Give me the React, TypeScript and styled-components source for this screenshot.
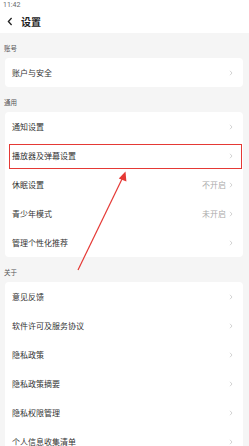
import styled, { createGlobalStyle } from "styled-components";

const Global = createGlobalStyle`
  html, body {
    margin: 0;
    padding: 0;
    background: #f5f5f5;
  }
  body {
    font-family: "Noto Sans CJK SC", "Noto Sans", sans-serif;
  }
`;

const Page = styled.div`
  position: relative;
  width: 249px;
  height: 446px;
  overflow: hidden;
  background: #f5f5f5;
`;

const Top = styled.div`
  background: #fff;
  height: 33px;
  display: flex;
  flex-direction: column;
`;

const StatusBar = styled.div`
  height: 12px;
  padding-left: 3px;
  font-family: Roboto, "Liberation Sans", sans-serif;
  font-size: 7px;
  line-height: 10px;
  color: #666;
`;

const Header = styled.div`
  flex: 1;
  display: flex;
  align-items: center;
  gap: 8px;
  padding-left: 7px;
  padding-bottom: 2px;

  h1 {
    margin: 0;
    font-size: 10px;
    font-weight: 700;
    color: #222;
  }
`;

const SectionLabel = styled.div`
  height: 25px;
  box-sizing: border-box;
  padding: 4px 0 0 4px;
  display: flex;
  align-items: center;
  font-size: 6.5px;
  color: #555;
`;

const Card = styled.div`
  margin: 0 6px 0 5px;
  background: #fff;
  border-radius: 4px;
  overflow: visible;
`;

const Row = styled.div`
  position: relative;
  height: 29px;
  display: flex;
  align-items: center;
  padding: 0 10px 0 7px;
  font-size: 8px;
  color: #333;
`;

const Label = styled.span`
  flex: 1;
`;

const Value = styled.span`
  color: #aaa;
  font-size: 8px;
  margin-right: 3px;
`;

const Highlight = styled.div`
  position: absolute;
  top: 3px;
  bottom: 1px;
  left: 4px;
  right: 1px;
  border: 1px solid #e53935;
`;

const Overlay = styled.svg`
  position: absolute;
  left: 0;
  top: 0;
  pointer-events: none;
`;

function Chevron() {
  return (
    <svg width="4" height="6" viewBox="0 0 4 6">
      <path d="M1 0.8 L3 3 L1 5.2" fill="none" stroke="#c8c8c8" strokeWidth="0.8" />
    </svg>
  );
}

type Item = { label: string; value?: string; marked?: boolean };

const sections: { title: string; items: Item[] }[] = [
  { title: "账号", items: [{ label: "账户与安全" }] },
  {
    title: "通用",
    items: [
      { label: "通知设置" },
      { label: "播放器及弹幕设置", marked: true },
      { label: "休眠设置", value: "不开启" },
      { label: "青少年模式", value: "未开启" },
      { label: "管理个性化推荐" },
    ],
  },
  {
    title: "关于",
    items: [
      { label: "意见反馈" },
      { label: "软件许可及服务协议" },
      { label: "隐私政策" },
      { label: "隐私政策摘要" },
      { label: "隐私权限管理" },
      { label: "个人信息收集清单" },
    ],
  },
];

export default function App() {
  return (
    <Page>
      <Global />
      <Top>
        <StatusBar>11:42</StatusBar>
        <Header>
          <svg width="6" height="9" viewBox="0 0 6 9">
            <path d="M4.6 1 L1.4 4.5 L4.6 8" fill="none" stroke="#222" strokeWidth="1.3" />
          </svg>
          <h1>设置</h1>
        </Header>
      </Top>
      {sections.map((s) => (
        <div key={s.title}>
          <SectionLabel>{s.title}</SectionLabel>
          <Card>
            {s.items.map((it) => (
              <Row key={it.label}>
                <Label>{it.label}</Label>
                {it.value && <Value>{it.value}</Value>}
                <Chevron />
                {it.marked && <Highlight />}
              </Row>
            ))}
          </Card>
        </div>
      ))}
      <Overlay width="249" height="446" viewBox="0 0 249 446">
        <line x1="78" y1="270" x2="122.5" y2="178" stroke="#e53935" strokeWidth="1.2" />
        <polygon points="125.5,171.5 118.8,178.6 126.4,181.5" fill="#e53935" />
      </Overlay>
    </Page>
  );
}
